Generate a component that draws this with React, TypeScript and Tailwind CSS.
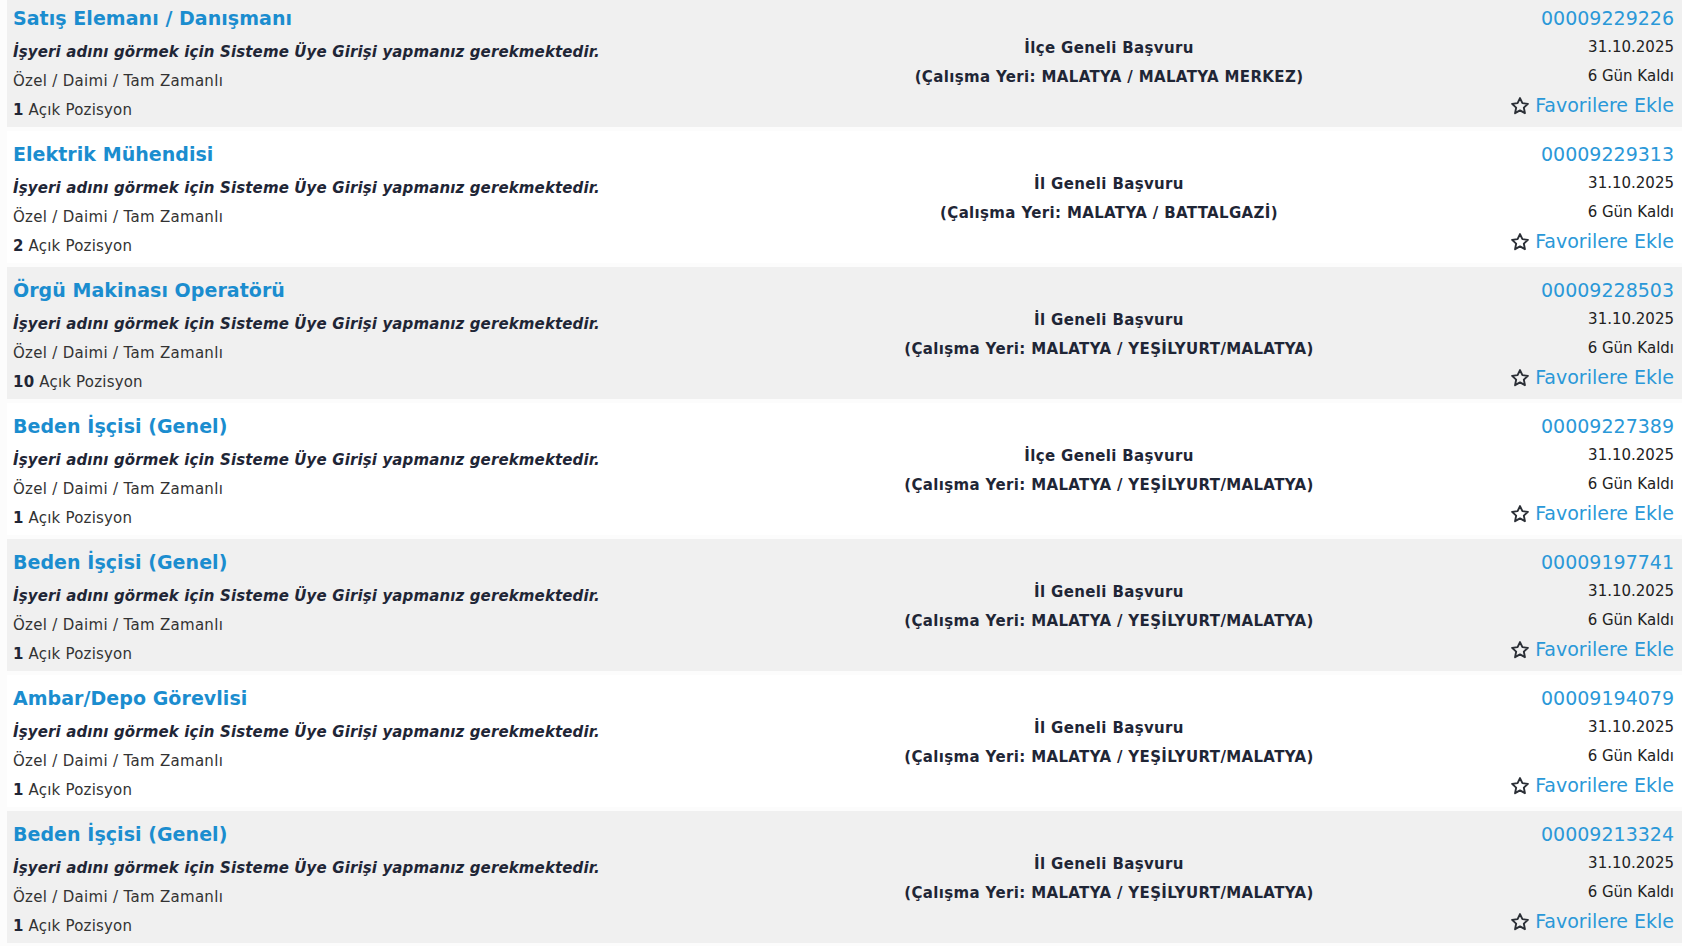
import React from 'react'

type Job = {
  title: string
  scope: string
  place: string
  no: string
  open: number
}

const jobs: Job[] = [
  { title: 'Satış Elemanı / Danışmanı', scope: 'İlçe Geneli Başvuru', place: 'MALATYA / MALATYA MERKEZ', no: '00009229226', open: 1 },
  { title: 'Elektrik Mühendisi', scope: 'İl Geneli Başvuru', place: 'MALATYA / BATTALGAZİ', no: '00009229313', open: 2 },
  { title: 'Örgü Makinası Operatörü', scope: 'İl Geneli Başvuru', place: 'MALATYA / YEŞİLYURT/MALATYA', no: '00009228503', open: 10 },
  { title: 'Beden İşçisi (Genel)', scope: 'İlçe Geneli Başvuru', place: 'MALATYA / YEŞİLYURT/MALATYA', no: '00009227389', open: 1 },
  { title: 'Beden İşçisi (Genel)', scope: 'İl Geneli Başvuru', place: 'MALATYA / YEŞİLYURT/MALATYA', no: '00009197741', open: 1 },
  { title: 'Ambar/Depo Görevlisi', scope: 'İl Geneli Başvuru', place: 'MALATYA / YEŞİLYURT/MALATYA', no: '00009194079', open: 1 },
  { title: 'Beden İşçisi (Genel)', scope: 'İl Geneli Başvuru', place: 'MALATYA / YEŞİLYURT/MALATYA', no: '00009213324', open: 1 },
]

function StarIcon() {
  return (
    <svg width="20" height="20" viewBox="0 0 24 24" fill="none" stroke="#2b2f36" strokeWidth="2.3" strokeLinejoin="round">
      <polygon points="12,2.5 14.9,8.6 21.5,9.4 16.6,13.9 17.9,20.6 12,17.3 6.1,20.6 7.4,13.9 2.5,9.4 9.1,8.6" />
    </svg>
  )
}

function JobRow({ job, shaded }: { job: Job; shaded: boolean }) {
  return (
    <div className={`grid h-[132px] grid-cols-[830px_544px_1fr] ${shaded ? 'bg-[#f0f0f0]' : 'bg-white'}`}>
      <div className="pl-[6px] pt-[9px]">
        <a className="block h-[29px] text-[19px] font-bold leading-[29px] tracking-[0.05px] text-[#1b8dcf]">{job.title}</a>
        <div className="mt-[5px] h-[29px] text-[15px] font-bold italic leading-[29px] tracking-[0.13px] text-[#1f2636]">
          İşyeri adını görmek için Sisteme Üye Girişi yapmanız gerekmektedir.
        </div>
        <div className="h-[29px] text-[15px] leading-[29px] tracking-[0.3px] text-[#333]">Özel / Daimi / Tam Zamanlı</div>
        <div className="h-[29px] text-[15px] leading-[29px] tracking-[0.2px] text-[#333]">
          <b className="text-[#1f2636]">{job.open}</b> Açık Pozisyon
        </div>
      </div>
      <div className="flex flex-col items-center justify-center pt-[4px] text-[15px] font-bold leading-[29px] tracking-[0.35px] text-[#1f2636]">
        <div>{job.scope}</div>
        <div>(Çalışma Yeri: {job.place})</div>
      </div>
      <div className="flex flex-col items-end pr-[8px] pt-[9px] text-[15px] leading-[29px] text-[#222]">
        <a className="text-[19px] text-[#2a98d8]">{job.no}</a>
        <div>31.10.2025</div>
        <div>6 Gün Kaldı</div>
        <a className="flex items-center gap-[5px] text-[19px] text-[#2a98d8]">
          <StarIcon />
          Favorilere Ekle
        </a>
      </div>
    </div>
  )
}

export default function App() {
  return (
    <div className="min-h-screen overflow-hidden bg-[#fcfcfc] font-['DejaVu_Sans',sans-serif]">
      <div className="-mt-[5px] flex flex-col gap-[4px] pl-[7px]">
        {jobs.map((job, i) => (
          <JobRow key={job.no} job={job} shaded={i % 2 === 0} />
        ))}
      </div>
    </div>
  )
}
